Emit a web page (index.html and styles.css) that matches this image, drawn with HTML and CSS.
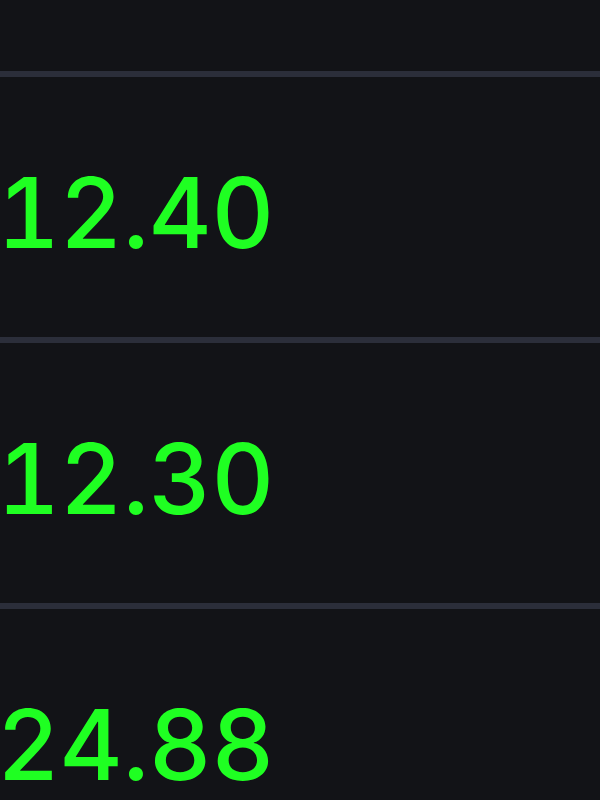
FILE: index.html
```html
<!DOCTYPE html>
<html lang="en">
<head>
  <meta charset="UTF-8">
  <title>prices</title>
  <link rel="stylesheet" href="styles.css">
</head>
<body>
  <div class="table">
    <div class="row head"></div>
    <div class="row"><span class="price">12.40</span></div>
    <div class="row"><span class="price">12.30</span></div>
    <div class="row"><span class="price">24.88</span></div>
  </div>
</body>
</html>
```

FILE: styles.css
```css
body {
  background: #121317;
  margin: 0;
  height: 100vh;
  overflow: hidden;

  font-family: "Inter", sans-serif;
  font-weight: 500;
}

.table {
  display: flex;
  flex-direction: column;
}

.row {
  height: 266px;
  border-bottom: 6px solid #2b2e3a;
  display: flex;
  align-items: flex-end;
  padding-bottom: 76px;
  box-sizing: border-box;
}

.row.head {
  height: 77px;
  padding: 0;
}

.price {
  color: #1fff22;
  font-size: 97px;
  line-height: 1;
  margin-left: -3px;
  font-variant-numeric: tabular-nums;
}
```
